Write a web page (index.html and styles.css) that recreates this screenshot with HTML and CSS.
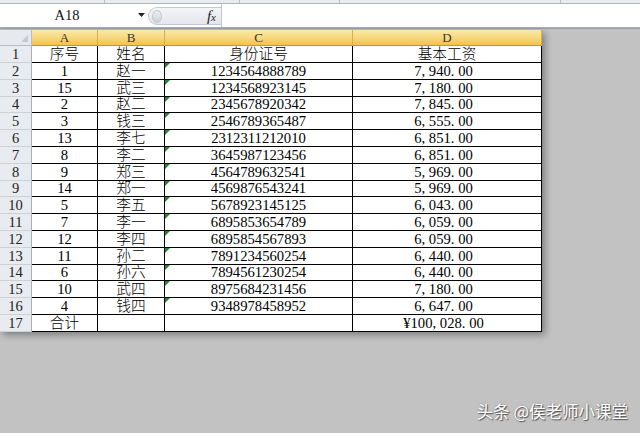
FILE: index.html
```html
<!DOCTYPE html>
<html lang="zh">
<head>
<meta charset="utf-8">
<title>Sheet</title>
<link rel="stylesheet" href="styles.css">
</head>
<body>
<div class="app">
  <div class="ribbon"><span class="rb rb1"></span><span class="rb rb2"></span><span class="rb rb3"></span><span class="rb rb4"></span><span class="rb rb5"></span></div>
  <div class="fbar">
    <div class="namebox">A18</div>
    <div class="dd"><svg width="7" height="4" viewBox="0 0 7 4"><path d="M0 0h7L3.5 4z" fill="#222"/></svg></div>
    <div class="pill"><span class="grip"></span><span class="fx">f<span class="fxx">x</span></span></div>
    <div class="input"></div>
  </div>
  <div class="main">
    <div class="sheet">
      <div class="corner"></div>
      <div class="ch">A</div><div class="ch">B</div><div class="ch">C</div><div class="ch">D</div>

      <div class="rh">1</div><div class="c">序号</div><div class="c">姓名</div><div class="c">身份证号</div><div class="c">基本工资</div>
      <div class="rh">2</div><div class="c">1</div><div class="c">赵一</div><div class="c t">1234564888789</div><div class="c m">7<span class="p">,</span>940<span class="p">.</span>00</div>
      <div class="rh">3</div><div class="c">15</div><div class="c">武三</div><div class="c t">1234568923145</div><div class="c m">7<span class="p">,</span>180<span class="p">.</span>00</div>
      <div class="rh">4</div><div class="c">2</div><div class="c">赵二</div><div class="c t">2345678920342</div><div class="c m">7<span class="p">,</span>845<span class="p">.</span>00</div>
      <div class="rh">5</div><div class="c">3</div><div class="c">钱三</div><div class="c t">2546789365487</div><div class="c m">6<span class="p">,</span>555<span class="p">.</span>00</div>
      <div class="rh">6</div><div class="c">13</div><div class="c">李七</div><div class="c t">2312311212010</div><div class="c m">6<span class="p">,</span>851<span class="p">.</span>00</div>
      <div class="rh">7</div><div class="c">8</div><div class="c">李二</div><div class="c t">3645987123456</div><div class="c m">6<span class="p">,</span>851<span class="p">.</span>00</div>
      <div class="rh">8</div><div class="c">9</div><div class="c">郑三</div><div class="c t">4564789632541</div><div class="c m">5<span class="p">,</span>969<span class="p">.</span>00</div>
      <div class="rh">9</div><div class="c">14</div><div class="c">郑一</div><div class="c t">4569876543241</div><div class="c m">5<span class="p">,</span>969<span class="p">.</span>00</div>
      <div class="rh">10</div><div class="c">5</div><div class="c">李五</div><div class="c t">5678923145125</div><div class="c m">6<span class="p">,</span>043<span class="p">.</span>00</div>
      <div class="rh">11</div><div class="c">7</div><div class="c">李一</div><div class="c t">6895853654789</div><div class="c m">6<span class="p">,</span>059<span class="p">.</span>00</div>
      <div class="rh">12</div><div class="c">12</div><div class="c">李四</div><div class="c t">6895854567893</div><div class="c m">6<span class="p">,</span>059<span class="p">.</span>00</div>
      <div class="rh">13</div><div class="c">11</div><div class="c">孙二</div><div class="c t">7891234560254</div><div class="c m">6<span class="p">,</span>440<span class="p">.</span>00</div>
      <div class="rh">14</div><div class="c">6</div><div class="c">孙六</div><div class="c t">7894561230254</div><div class="c m">6<span class="p">,</span>440<span class="p">.</span>00</div>
      <div class="rh">15</div><div class="c">10</div><div class="c">武四</div><div class="c t">8975684231456</div><div class="c m">7<span class="p">,</span>180<span class="p">.</span>00</div>
      <div class="rh">16</div><div class="c">4</div><div class="c">钱四</div><div class="c t">9348978458952</div><div class="c m">6<span class="p">,</span>647<span class="p">.</span>00</div>
      <div class="rh">17</div><div class="c">合计</div><div class="c"></div><div class="c"></div><div class="c m">¥100<span class="p">,</span>028<span class="p">.</span>00</div>
    </div>
  </div>
  <div class="wm">头条 @侯老师小课堂</div>
</div>
</body>
</html>
```

FILE: styles.css
```css
* { box-sizing: border-box; }
html, body { margin: 0; padding: 0; }
body {
  width: 640px;
  height: 433px;
  overflow: hidden;
  background: #c2c2c2;
  font-family: "Liberation Serif", "Noto Sans CJK SC", serif;
  color: #000;
}
.app {
  position: relative;
  width: 640px;
  height: 433px;
  display: flex;
  flex-direction: column;
}
.ribbon {
  height: 4px;
  display: flex;
  background: #e8ebef;
  border-bottom: 1px solid #aeb4bc;
}
.rb { height: 100%; border-right: 1px solid #b9bec5; }
.rb1 { width: 105px; }
.rb2 { width: 135px; }
.rb3 { width: 100px; }
.rb4 { width: 221px; }
.rb5 { flex: 1; border-right: 0; }

.fbar {
  height: 24px;
  display: flex;
  align-items: center;
  background: #fff;
  border-bottom: 1px solid #a9b0b8;
}
.namebox {
  width: 134px;
  height: 100%;
  display: flex;
  align-items: center;
  justify-content: center;
  font-size: 14.5px;
  color: #111;
}
.dd {
  width: 14px;
  display: flex;
  justify-content: center;
  align-items: center;
  padding-bottom: 1px;
}
.pill {
  width: 73px;
  height: 18px;
  margin-top: 1px;
  display: flex;
  align-items: center;
  justify-content: space-between;
  padding: 0 5px 0 3px;
  border: 1px solid #c4c8ce;
  border-right: 0;
  border-radius: 9px 0 0 9px;
  background: linear-gradient(#f4f5f7, #e3e6ea);
}
.grip {
  width: 10px;
  height: 13px;
  border-radius: 50%;
  background: linear-gradient(#eceef1, #cfd3d8);
  border: 1px solid #c3c7cd;
}
.fx {
  font-family: "Liberation Serif", serif;
  font-style: italic;
  font-size: 15px;
  color: #222;
  line-height: 1;
}
.fxx { font-size: 11px; }
.input {
  flex: 1;
  height: 100%;
  border-left: 1px solid #c0c5cc;
  background: #fff;
}

.main {
  flex: 1;
  background: #c2c2c2;
  border-top: 1px solid #9ba1a8;
  padding-top: 1px;
}
.sheet {
  width: 542px;
  display: grid;
  grid-template-columns: 32px 66px 67px 188px 189px;
  grid-template-rows: 16px 17px 17px 17px 16px 17px 17px 17px 17px 16px 17px 17px 17px 17px 16px 17px 17px 17px;
  background: #fff;
  box-shadow: 3px 3px 7px rgba(0, 0, 0, 0.35);
}
.corner {
  position: relative;
  background: #e6e9ed;
  border-right: 1px solid #b7bcc3;
  border-bottom: 1px solid #b7bcc3;
}
.corner::after {
  content: "";
  position: absolute;
  right: 3px;
  bottom: 3px;
  width: 0;
  height: 0;
  border-left: 7px solid transparent;
  border-bottom: 7px solid #c5c9ce;
}
.ch {
  display: flex;
  align-items: center;
  justify-content: center;
  font-size: 13px;
  color: #333;
  background: linear-gradient(#fbe8a8, #f7d97f 50%, #f2c24f);
  border-right: 1px solid #d9ad4c;
  border-bottom: 1px solid #c2973a;
}
.rh {
  display: flex;
  align-items: center;
  justify-content: center;
  font-size: 14.5px;
  color: #222;
  background: #e8ebef;
  border-right: 1px solid #a9afb7;
  border-bottom: 1px solid #cdd1d6;
}
.c {
  position: relative;
  display: flex;
  align-items: center;
  justify-content: center;
  font-size: 14.67px;
  font-weight: 300;
  line-height: 1;
  white-space: nowrap;
  border-right: 1px solid #000;
  border-bottom: 1px solid #000;
}
.m { padding-right: 7px; }
.t::before {
  content: "";
  position: absolute;
  left: 0;
  top: 0;
  width: 0;
  height: 0;
  border-top: 5px solid #1f8a2a;
  border-right: 5px solid transparent;
}
.p {
  display: inline-block;
  width: 0.5em;
  text-align: left;
}
.wm {
  position: absolute;
  right: 12px;
  bottom: 14px;
  font-family: "Noto Sans CJK SC", sans-serif;
  font-size: 16.5px;
  line-height: 1;
  color: #fff;
  text-shadow: 1px 1px 1px rgba(0, 0, 0, 0.55), 0 0 2px rgba(0, 0, 0, 0.25);
}
```
